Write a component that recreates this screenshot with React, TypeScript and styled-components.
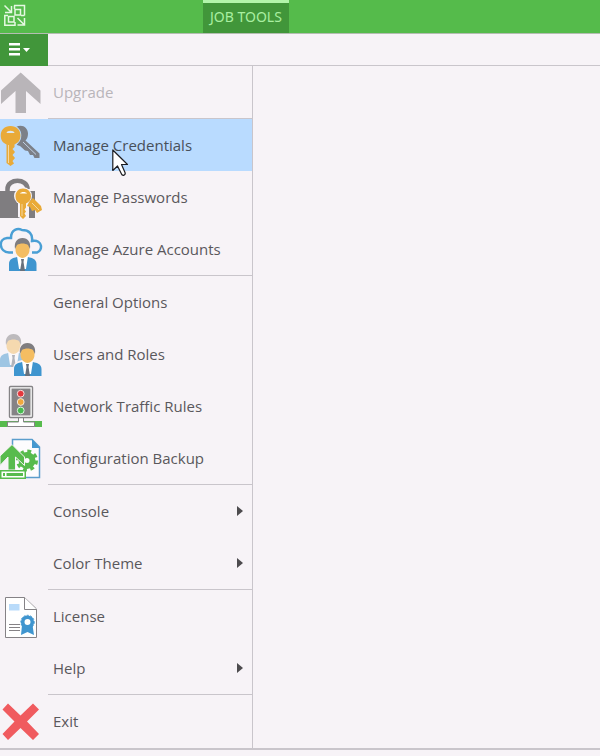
import React from "react";
import styled, { createGlobalStyle, css } from "styled-components";

const line = "#c9c5cb";

const GlobalStyle = createGlobalStyle`
  *, *::before, *::after { box-sizing: border-box; }
  html, body, #root { height: 100%; }
  body {
    margin: 0;
    background: #f7f3f7;
    color: #5a585c;
    font-family: "Open Sans", "Noto Sans", sans-serif;
    font-size: 15px;
  }
  button { font: inherit; color: inherit; border: 0; margin: 0; cursor: default; }
  svg { display: block; }
`;

const Window = styled.div`
  min-height: 100%;
  display: flex;
  flex-direction: column;
`;

const TitleBar = styled.header`
  height: 34px;
  display: flex;
  background: #55bb4b;
  border-bottom: 1px solid #b4bdb2;
`;

const Logo = styled.div`
  width: 203px;
  padding: 4px;
`;

const ContextTab = styled.button`
  display: flex;
  align-items: flex-start;
  padding: 0 7px;
  background: #41963a;
  color: #a9efa1;
  border-top: 3px solid #b2f5aa;
  font-family: "Noto Sans", sans-serif;
  font-size: 14px;
  line-height: 28px;
`;

const MenuBar = styled.div`
  height: 32px;
  display: flex;
  border-bottom: 1px solid ${line};
`;

const MenuToggle = styled.button`
  width: 48px;
  height: 32px;
  padding: 0;
  background: #41963a;
`;

const Body = styled.main`
  display: flex;
  border-bottom: 2px solid ${line};
`;

const Menu = styled.nav`
  width: 253px;
  padding-bottom: 1px;
  border-right: 1px solid ${line};
`;

const Separator = styled.hr`
  height: 1px;
  margin: 0 0 0 48px;
  border: 0;
  background: ${line};
`;

const Item = styled.button<{ $active?: boolean }>`
  position: relative;
  width: 100%;
  height: 52px;
  padding: 0;
  display: flex;
  align-items: center;
  text-align: left;
  background: transparent;
  &:disabled { color: #b9b5ba; }
  ${(p) => p.$active && css`background: #b9dbff; color: #48505a;`}
`;

const IconCell = styled.span`
  width: 48px;
  height: 52px;
  flex: none;
`;

const Label = styled.span`
  flex: 1;
  padding-left: 5px;
  line-height: 20px;
  white-space: nowrap;
`;

const Arrow = styled.svg`
  margin-right: 9px;
`;

const Pointer = styled.svg`
  position: absolute;
  left: 112px;
  top: 30px;
  z-index: 1;
`;

const Draw = ({ children }: { children: React.ReactNode }) => (
  <svg width="48" height="52" viewBox="0 0 48 52" aria-hidden="true">{children}</svg>
);

const UpgradeIcon = () => (
  <Draw><path fill="#b9b5b9" d="M20.7 6.5 40.5 24.5V38L26 25V47H15.5V25L1 38V24.5Z" /></Draw>
);

const KeysIcon = () => (
  <Draw>
    <path fill="#7c8088" d="M16 8C22 4.500 28 8.500 28 14.500C28 18 27 20 25.500 21.500L39.500 34.500V39H34.500L33 36 30 36 28 32 25 31.500 20 27 17 26Z" />
    <path stroke="#c3d3e6" strokeWidth="1" d="M23 23 36 35.500" />
    <circle cx="10.500" cy="16.500" r="10.800" fill="#b9dbff" />
    <path fill="#e9aa38" d="M10.500 7C4.500 7 .7 11 .7 16.500C.7 21 3 24 6.500 25.500V44L10.500 47 14 44.500 12.500 42 15 39 12.500 36 15 33 12.500 30 14.500 28V25.500C18 24 20.500 21 20.500 16.500C20.500 11 16.500 7 10.500 7Z" />
    <path fill="#dce7ef" d="M6.500 14C7 11 14 11 14.500 14Z" />
    <path stroke="#f4d7a0" d="M8.500 26V44" />
  </Draw>
);

const PasswordIcon = () => (
  <Draw>
    <path fill="none" stroke="#7f7d80" strokeWidth="4.500" d="M7.500 21V18C7.500 7 27.500 7 27.500 18" />
    <path fill="#7f7d80" d="M0 20H35V47H0Z" />
    <circle cx="23" cy="25" r="9" fill="#f7f3f7" />
    <path fill="#f7f3f7" d="M18 30H29V48L25 49 18 46Z" />
    <path fill="#e9aa38" d="M23 17.500C18.500 17.500 15.500 21 15.500 25.500C15.500 29 17 31 20 32.500V45L23 48 26 45 24.500 42.500 26 40.500 24.500 38.500 26 36.500V32.500C29 31 31 29 31 25.500C31 21 28 17.500 23 17.500Z" />
    <path fill="#e9aa38" d="M29 31 33 27 41 35 42 39 37 42 35 39 32 40 30 36 27 35Z" />
    <path fill="#fff" d="M20 22.500C21 20.500 26 20.500 27 22.500Z" />
    <path stroke="#f4d7a0" d="M22 33V45M32 32 39 39" />
  </Draw>
);

const Person = ({ x, y, faded = false }: { x: number; y: number; faded?: boolean }) => (
  <g transform={`translate(${x} ${y})`} opacity={faded ? 0.48 : 1}>
    <path fill="#3f95cf" d="M0 33V26C0 21 4 20 8 19H19C23 20 27.500 21 27.500 26V33Z" />
    <path fill="#fff" d="M8 18H19L17 31H10Z" />
    <path fill="#68717c" d="M12 21H15L14.500 24 16 33H11L12.500 24Z" />
    <path fill="#f4bd62" d="M6.500 7C6.500 1 20.500 1 20.500 7V12C20.500 17 16 20 13.500 20C11 20 6.500 17 6.500 12Z" />
    <path fill="#7f7d80" d="M6 11C5 4 8 0 13.500 0C19 0 22 4 21 11L19 7C16 5 11 5 8 7Z" />
  </g>
);

const AzureIcon = () => (
  <Draw>
    <path fill="none" stroke="#4a9fd5" strokeWidth="2.500" d="M13 29.500H9C-1 29-2 16 7 15H11C11 6 18 5 22 7C29 7 33 11 32 18C43 16 43 28 37 29.500H32" />
    <circle cx="22.500" cy="23" r="9" fill="#f7f3f7" />
    <Person x={9} y={15} />
  </Draw>
);

const UsersIcon = () => (
  <Draw>
    <Person x={0} y={6} faded />
    <circle cx="28" cy="22" r="8.500" fill="#f7f3f7" />
    <path fill="#f7f3f7" d="M13 48V40C14 34 18 33 22 32H34L42 38V48Z" />
    <Person x={14} y={15} />
  </Draw>
);

const TrafficIcon = () => (
  <Draw>
    <path fill="#57bb4d" d="M0 41H42V47H0Z" />
    <path fill="#fff" stroke="#858386" d="M18.500 37V42H7.500V46.500H34.500V42H23.500V37" />
    <rect x="9.500" y="6.500" width="23" height="31" rx="1" fill="#fff" stroke="#858386" strokeWidth="1.400" />
    <rect x="11.500" y="8.500" width="19" height="27" fill="#858386" />
    <circle cx="20.700" cy="13.700" r="3.400" fill="#e5383d" stroke="#f5dddd" />
    <circle cx="20.700" cy="22" r="3.400" fill="#f0a73d" stroke="#f3eadd" />
    <circle cx="20.700" cy="30.500" r="3.400" fill="#48ba50" stroke="#ddf3dd" />
  </Draw>
);

const BackupIcon = () => (
  <Draw>
    <path fill="#fdfcfe" stroke="#5b9dcc" strokeWidth="1.500" d="M12.500 7.500H32L39.500 15V45.500H12.500Z" />
    <path fill="#4698cf" d="M32 7 40 16H32Z" />
    <circle cx="27" cy="28.500" r="5.500" fill="none" stroke="#57bb4d" strokeWidth="6" />
    <circle cx="27" cy="28.500" r="9" fill="none" stroke="#57bb4d" strokeWidth="4" strokeDasharray="3.700 3.370" />
    <path fill="#57bb4d" stroke="#f7f3f7" d="M12 12.500 24.500 25V33.500L15.500 25V38H8V25L0 33.500V24Z" />
    <path fill="#57bb4d" d="M0 38H26V47H0Z" />
    <path fill="#fff" d="M1.500 39.500H24.500V45.500H1.500Z" />
    <path fill="#57bb4d" d="M3 41H5V44H3ZM6.500 41H23V44H6.500Z" />
  </Draw>
);

const LicenseIcon = () => (
  <Draw>
    <path fill="#fff" stroke="#858286" d="M5.500 7.500H24.500L36.500 19V47.500H5.500Z" />
    <path fill="#fff" stroke="#858286" d="M24.500 7.500V19.500H36.500" />
    <path fill="#b9dbfa" d="M9 14H19.500V20.500H9Z" />
    <path stroke="#858286" strokeWidth="1.200" d="M9 34.500H20M9 37.500H20M9 40.500H20" />
    <path fill="#3f95cf" d="M22 35H32.500L34 45 27.500 42 21 45Z" />
    <circle cx="27.500" cy="32" r="4.800" fill="#fff" stroke="#3f95cf" strokeWidth="3.600" />
    <circle cx="27.500" cy="32" r="6.700" fill="none" stroke="#3f95cf" strokeDasharray="2 1.400" />
  </Draw>
);

const ExitIcon = () => (
  <Draw><path fill="#f05b5f" d="M8 8.500 20.500 20.500 33 8.500 39 14.500 27 26.500 39 39 33 45 20.500 33 8 45 2.500 39 14.500 26.500 2.500 14.500Z" /></Draw>
);

type Entry = {
  label: string;
  icon?: React.ReactNode;
  disabled?: boolean;
  active?: boolean;
  submenu?: boolean;
};

const groups: Entry[][] = [
  [{ label: "Upgrade", icon: <UpgradeIcon />, disabled: true }],
  [
    { label: "Manage Credentials", icon: <KeysIcon />, active: true },
    { label: "Manage Passwords", icon: <PasswordIcon /> },
    { label: "Manage Azure Accounts", icon: <AzureIcon /> },
  ],
  [
    { label: "General Options" },
    { label: "Users and Roles", icon: <UsersIcon /> },
    { label: "Network Traffic Rules", icon: <TrafficIcon /> },
    { label: "Configuration Backup", icon: <BackupIcon /> },
  ],
  [
    { label: "Console", submenu: true },
    { label: "Color Theme", submenu: true },
  ],
  [
    { label: "License", icon: <LicenseIcon /> },
    { label: "Help", submenu: true },
  ],
  [{ label: "Exit", icon: <ExitIcon /> }],
];

const MenuItem = ({ entry }: { entry: Entry }) => (
  <Item type="button" disabled={entry.disabled} $active={entry.active} aria-haspopup={entry.submenu ? "menu" : undefined}>
    <IconCell>{entry.icon}</IconCell>
    <Label>{entry.label}</Label>
    {entry.submenu && (
      <Arrow width="6" height="10" viewBox="0 0 6 10" aria-hidden="true">
        <path fill="#4d4b4e" d="M0 0 6 5 0 10Z" />
      </Arrow>
    )}
    {entry.active && (
      <Pointer width="18" height="29" viewBox="0 0 18 29" aria-hidden="true">
        <path fill="#fff" stroke="#1c1c20" strokeWidth="1.200" strokeLinejoin="round" d="M.8 1V21.500L5.500 17 9.500 25C10.500 27.500 14 26 13 23.500L9.500 15.500H15.500Z" />
      </Pointer>
    )}
  </Item>
);

export default function App() {
  return (
    <Window>
      <GlobalStyle />
      <TitleBar>
        <Logo>
          <svg width="22" height="22" viewBox="0 0 22 22" fill="none" stroke="#e6f8e2" strokeWidth="1.500" aria-hidden="true">
            <path d="M.5 1.500 7 8M7.500 2V8.500H1M10 1.500H20.500V11.500M10.500 1.500V5M20.500 11.500H17M11 5.500H16.500V11H11ZM4.500 12.500H10V18H4.500ZM4 11.500H.8V21.200H11V18M13.500 14 20 20.500M20.500 14V21H13.500" />
          </svg>
        </Logo>
        <ContextTab type="button">JOB TOOLS</ContextTab>
      </TitleBar>
      <MenuBar>
        <MenuToggle type="button" aria-label="Main menu" aria-expanded="true">
          <svg width="48" height="32" viewBox="0 0 48 32" fill="#fff" aria-hidden="true">
            <path d="M9 9H20V11.500H9ZM9 14H20V16.500H9ZM9 19H20V21.500H9ZM23 14H30L26.500 18Z" />
          </svg>
        </MenuToggle>
      </MenuBar>
      <Body>
        <Menu aria-label="Main menu">
          {groups.map((group, i) => (
            <React.Fragment key={i}>
              {i > 0 && <Separator />}
              {group.map((entry) => <MenuItem key={entry.label} entry={entry} />)}
            </React.Fragment>
          ))}
        </Menu>
      </Body>
    </Window>
  );
}
